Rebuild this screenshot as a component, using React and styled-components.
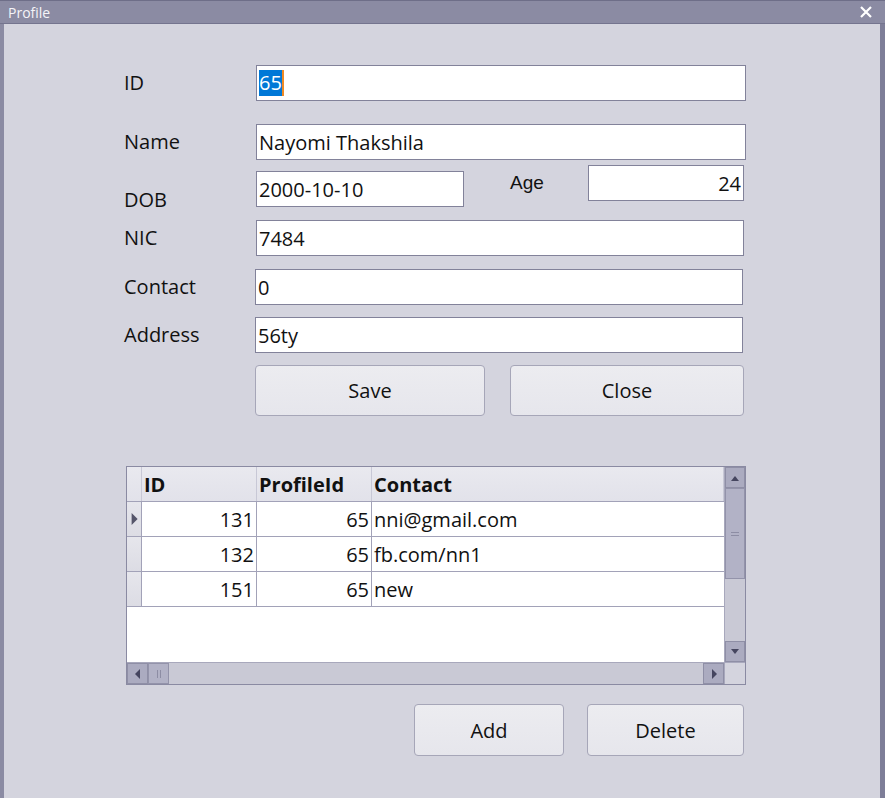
import styled, { createGlobalStyle } from "styled-components";

const GlobalStyles = createGlobalStyle`
  html, body {
    margin: 0;
    padding: 0;
    background: #d4d4de;
  }
  * {
    box-sizing: border-box;
  }
`;

const Window = styled.div`
  width: 885px;
  height: 798px;
  display: flex;
  flex-direction: column;
  overflow: hidden;
  font-family: "Open Sans", "Noto Sans", sans-serif;
  color: #111;
`;

const TitleBar = styled.div`
  height: 24px;
  flex: none;
  display: flex;
  align-items: center;
  justify-content: space-between;
  padding: 0 8px 0 8px;
  background: #8b8ba3;
  border-top: 1px solid #6e6e88;
  border-bottom: 1px solid #74748e;
  color: #f4f4f8;
  font-size: 14px;
`;

const CloseX = styled.svg`
  width: 14px;
  height: 14px;
  margin-right: 4px;
`;

const Client = styled.div`
  flex: 1;
  background: #d4d4de;
  border-left: 4px solid #8b8ba3;
  border-right: 5px solid #7e7e98;
  padding-left: 120px;
  display: flex;
  flex-direction: column;
`;

const Row = styled.div`
  display: flex;
  align-items: ${(p) => (p.$top ? "flex-start" : "center")};
  margin-top: ${(p) => p.$mt || 0}px;
`;

const Label = styled.div`
  width: ${(p) => p.$w || 132}px;
  flex: none;
  font-size: 20px;
  line-height: 22px;
  margin-top: ${(p) => p.$mt || 0}px;
`;

const AgeLabel = styled.div`
  font-family: "Liberation Sans", Arial, sans-serif;
  font-size: 19px;
  line-height: 22px;
  margin: 7px 0 0 46px;
  width: 78px;
`;

const Field = styled.div`
  width: ${(p) => p.$w}px;
  height: 36px;
  flex: none;
  margin-top: ${(p) => p.$mt || 0}px;
  background: #fff;
  border: 1px solid #82829a;
  display: flex;
  align-items: center;
  justify-content: ${(p) => (p.$right ? "flex-end" : "flex-start")};
  padding: 0 2px;
  font-size: 20px;
  white-space: nowrap;
`;

const Selected = styled.span`
  background: #0078d7;
  color: #fff;
  line-height: 26px;
  border-right: 2px solid #f08a24;
`;

const ButtonRow = styled.div`
  display: flex;
  margin-top: ${(p) => p.$mt}px;
  margin-left: ${(p) => p.$ml || 0}px;
  gap: ${(p) => p.$gap}px;
`;

const Button = styled.button`
  width: ${(p) => p.$w}px;
  height: ${(p) => p.$h || 51}px;
  background: linear-gradient(#ececf0, #e6e6ec);
  border: 1px solid #a6a6b8;
  border-radius: 4px;
  font-family: "Open Sans", "Noto Sans", sans-serif;
  font-size: 20px;
  color: #111;
  padding: 0;
`;

const Grid = styled.div`
  margin: 50px 0 0 2px;
  width: 620px;
  height: 219px;
  border: 1px solid #8a8aa2;
  background: #fff;
  display: grid;
  grid-template-columns: 1fr 21px;
  grid-template-rows: 1fr 22px;
`;

const Body = styled.div`
  overflow: hidden;
`;

const GridRow = styled.div`
  display: grid;
  grid-template-columns: 15px 115px 115px 1fr;
  height: 35px;
  border-bottom: 1px solid #a2a2b8;
`;

const HeadCell = styled.div`
  background: linear-gradient(#e9e9ef, #e2e2ea);
  border-right: 1px solid #c8c8d6;
  display: flex;
  align-items: center;
  padding-left: 2px;
  font-size: 20px;
  font-weight: 700;
`;

const RowHead = styled.div`
  background: linear-gradient(#e6e6ec, #dcdce4);
  border-right: 1px solid #a2a2b8;
  display: flex;
  align-items: center;
  justify-content: center;
`;

const Cell = styled.div`
  border-right: ${(p) => (p.$last ? "none" : "1px solid #a2a2b8")};
  display: flex;
  align-items: center;
  justify-content: ${(p) => (p.$right ? "flex-end" : "flex-start")};
  padding: 0 2px;
  font-size: 20px;
  white-space: nowrap;
`;

const VScroll = styled.div`
  background: #c9c9d5;
  display: flex;
  flex-direction: column;
  border-left: 1px solid #a8a8bc;
`;

const HScroll = styled.div`
  background: #c9c9d5;
  display: flex;
  border-top: 1px solid #a8a8bc;
`;

const ScrollBtn = styled.div`
  width: ${(p) => p.$w || 21}px;
  height: ${(p) => p.$h || 21}px;
  flex: none;
  background: #ababc0;
  border: 1px solid #8f8fa6;
  display: flex;
  align-items: center;
  justify-content: center;
`;

const Thumb = styled.div`
  width: ${(p) => p.$w || 21}px;
  height: ${(p) => p.$h || 21}px;
  flex: none;
  background: #b2b2c6;
  border: 1px solid #9393aa;
  display: flex;
  align-items: center;
  justify-content: center;
`;

const Spacer = styled.div`
  flex: 1;
`;

const Corner = styled.div`
  background: #d4d4de;
  border-top: 1px solid #a8a8bc;
  border-left: 1px solid #a8a8bc;
`;

const Arrow = ({ dir, color = "#45455f", size = 10 }) => {
  const pts = {
    up: "1,8 9,8 5,3",
    down: "1,2 9,2 5,7",
    left: "7,0 7,10 2,5",
    right: "3,0 3,10 8,5",
  }[dir];
  return (
    <svg width={size} height={size} viewBox="0 0 10 10">
      <polygon points={pts} fill={color} />
    </svg>
  );
};

const rows = [
  { id: 131, pid: 65, contact: "nni@gmail.com", current: true },
  { id: 132, pid: 65, contact: "fb.com/nn1" },
  { id: 151, pid: 65, contact: "new" },
];

function App() {
  return (
    <>
      <GlobalStyles />
      <Window>
        <TitleBar>
          <span>Profile</span>
          <CloseX viewBox="0 0 14 14">
            <path d="M2 2 L12 12 M12 2 L2 12" stroke="#fff" strokeWidth="2.2" />
          </CloseX>
        </TitleBar>
        <Client>
          <Row $mt={41}>
            <Label>ID</Label>
            <Field $w={490}>
              <Selected>65</Selected>
            </Field>
          </Row>
          <Row $mt={23}>
            <Label>Name</Label>
            <Field $w={490}>Nayomi Thakshila</Field>
          </Row>
          <Row $mt={5} $top>
            <Label $mt={24}>DOB</Label>
            <Field $w={208} $mt={6}>
              2000-10-10
            </Field>
            <AgeLabel>Age</AgeLabel>
            <Field $w={156} $right>
              24
            </Field>
          </Row>
          <Row $mt={9}>
            <Label>NIC</Label>
            <Field $w={488}>7484</Field>
          </Row>
          <Row $mt={13}>
            <Label $w={131}>Contact</Label>
            <Field $w={488}>0</Field>
          </Row>
          <Row $mt={12}>
            <Label $w={131}>Address</Label>
            <Field $w={488}>56ty</Field>
          </Row>
          <ButtonRow $mt={12} $ml={131} $gap={25}>
            <Button $w={230}>Save</Button>
            <Button $w={234}>Close</Button>
          </ButtonRow>

          <Grid>
            <Body>
              <GridRow>
                <HeadCell />
                <HeadCell>ID</HeadCell>
                <HeadCell>ProfileId</HeadCell>
                <HeadCell>Contact</HeadCell>
              </GridRow>
              {rows.map((r) => (
                <GridRow key={r.id}>
                  <RowHead>{r.current && <Arrow dir="right" color="#55556a" size={12} />}</RowHead>
                  <Cell $right>{r.id}</Cell>
                  <Cell $right>{r.pid}</Cell>
                  <Cell $last>{r.contact}</Cell>
                </GridRow>
              ))}
            </Body>
            <VScroll>
              <ScrollBtn $w={20}>
                <Arrow dir="up" />
              </ScrollBtn>
              <Thumb $w={20} $h={91}>
                <svg width="10" height="6" viewBox="0 0 10 6">
                  <path d="M1 1.5 H9 M1 4.5 H9" stroke="#8d8da4" strokeWidth="1" />
                </svg>
              </Thumb>
              <Spacer />
              <ScrollBtn $w={20}>
                <Arrow dir="down" />
              </ScrollBtn>
            </VScroll>
            <HScroll>
              <ScrollBtn $h={21}>
                <Arrow dir="left" />
              </ScrollBtn>
              <Thumb $h={21}>
                <svg width="6" height="10" viewBox="0 0 6 10">
                  <path d="M1.5 1 V9 M4.5 1 V9" stroke="#8d8da4" strokeWidth="1" />
                </svg>
              </Thumb>
              <Spacer />
              <ScrollBtn $h={21}>
                <Arrow dir="right" />
              </ScrollBtn>
            </HScroll>
            <Corner />
          </Grid>

          <ButtonRow $mt={19} $ml={290} $gap={23}>
            <Button $w={150} $h={52}>
              Add
            </Button>
            <Button $w={157} $h={52}>
              Delete
            </Button>
          </ButtonRow>
        </Client>
      </Window>
    </>
  );
}

export default App;
